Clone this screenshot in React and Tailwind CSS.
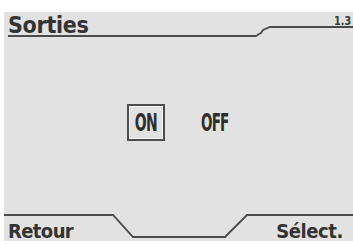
import React from "react";

const lcd = { fontFamily: '"DejaVu Sans Condensed", "DejaVu Sans", sans-serif' };

const Header = () => (
  <div className="relative h-[28px] flex justify-between items-start pt-[2px] pl-[4px] pr-[1px]" style={lcd}>
    <span className="text-[23px] leading-none font-bold text-[#333] tracking-[-0.3px]">Sorties</span>
    <span className="mt-[1px] text-[12px] leading-none font-bold text-[#3a3a3a] scale-x-90">1.3</span>
    {/* tab outline */}
    <svg className="absolute inset-0 pointer-events-none" width="349" height="28" viewBox="0 0 349 28">
      <polyline
        points="4,24 252,24 255,22 257,21 259,18 266,15 349,15"
        fill="none"
        stroke="#4a4a4a"
        strokeWidth="1.8"
      />
    </svg>
  </div>
);

const Footer = () => (
  <div className="relative h-[28px] flex justify-between items-start pt-[8px] pl-[4px] pr-[10px]" style={lcd}>
    <span className="text-[20px] leading-none font-bold text-[#333] tracking-[-0.6px]">Retour</span>
    <span className="text-[20px] leading-none font-bold text-[#333] tracking-[-0.4px]">Sélect.</span>
    <svg className="absolute inset-0 pointer-events-none" width="349" height="28" viewBox="0 0 349 28">
      <polyline
        points="0,2 109,2 129,24 221,24 243,2 349,2"
        fill="none"
        stroke="#4a4a4a"
        strokeWidth="1.8"
      />
    </svg>
  </div>
);

export default function App() {
  return (
    <div className="w-[353px] h-[245px] bg-white pl-[4px] pt-[12px] overflow-hidden">
      <div className="w-[349px] h-[229px] bg-[#e2e2e2] flex flex-col">
        <Header />

        {/* ON / OFF choice */}
        <div className="flex-1 flex items-center pl-[123px] pb-[8px]" style={lcd}>
          <div className="w-[38px] h-[37px] border-2 border-[#4d4d4d] shadow-[inset_0_0_0_1px_#f4f4f4] flex items-center justify-center">
            <span className="inline-block scale-x-[0.62] text-[25px] leading-none font-bold text-[#2e2e2e] tracking-[-1px]">ON</span>
          </div>
          <div className="ml-[30px] w-[40px] flex justify-center">
            <span className="inline-block scale-x-[0.6] text-[25px] leading-none font-bold text-[#2e2e2e] tracking-[-1.5px]">OFF</span>
          </div>
        </div>

        <Footer />
      </div>
    </div>
  );
}
